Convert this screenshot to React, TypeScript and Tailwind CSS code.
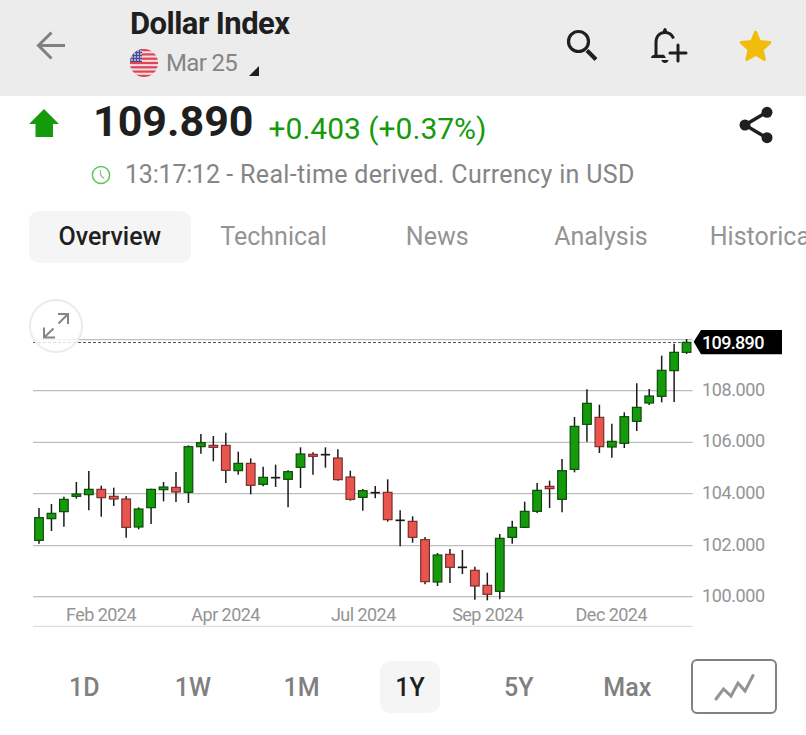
import { useState } from "react";
import clsx from "clsx";

// [high, body top, body bottom, low], in chart units (3 per pixel)
type Candle = [number, number, number, number, "up" | "down" | "flat"];

const CANDLES: Candle[] = [
  [654, 683, 751, 761, "up"],
  [642, 670, 686, 723, "up"],
  [620, 628, 665, 710, "up"],
  [576, 612, 619, 626, "up"],
  [543, 598, 614, 661, "up"],
  [587, 598, 623, 680, "down"],
  [593, 619, 627, 648, "down"],
  [618, 627, 712, 743, "down"],
  [652, 657, 711, 718, "up"],
  [596, 598, 653, 702, "up"],
  [576, 591, 599, 634, "up"],
  [546, 592, 606, 636, "down"],
  [466, 470, 607, 639, "up"],
  [432, 458, 470, 491, "up"],
  [438, 466, 472, 514, "down"],
  [428, 466, 541, 579, "down"],
  [485, 520, 542, 554, "up"],
  [505, 520, 586, 613, "down"],
  [530, 562, 583, 589, "up"],
  [524, 563, 563, 591, "flat"],
  [541, 545, 568, 652, "up"],
  [472, 492, 532, 594, "up"],
  [487, 493, 499, 554, "down"],
  [472, 494, 494, 533, "flat"],
  [478, 504, 569, 572, "down"],
  [542, 561, 628, 632, "down"],
  [597, 602, 622, 662, "up"],
  [588, 608, 608, 625, "flat"],
  [568, 607, 689, 695, "down"],
  [661, 691, 691, 769, "flat"],
  [679, 694, 742, 758, "down"],
  [741, 749, 875, 883, "down"],
  [789, 795, 876, 888, "up"],
  [777, 793, 832, 879, "down"],
  [780, 832, 832, 852, "flat"],
  [830, 841, 888, 929, "down"],
  [848, 886, 913, 931, "down"],
  [732, 745, 904, 928, "up"],
  [692, 712, 742, 761, "up"],
  [635, 664, 712, 714, "up"],
  [579, 601, 664, 669, "up"],
  [572, 589, 596, 654, "down"],
  [507, 542, 628, 667, "up"],
  [381, 409, 538, 547, "up"],
  [298, 340, 403, 455, "up"],
  [344, 382, 470, 489, "down"],
  [401, 454, 471, 503, "up"],
  [367, 380, 460, 474, "up"],
  [280, 352, 394, 423, "up"],
  [297, 318, 339, 345, "up"],
  [197, 241, 319, 337, "up"],
  [161, 187, 242, 336, "up"],
  [147, 157, 187, 192, "up"],
];

const GRID = [
  { y: 149, label: "" },
  { y: 302, label: "108.000" },
  { y: 457, label: "106.000" },
  { y: 611, label: "104.000" },
  { y: 767, label: "102.000" },
  { y: 920, label: "100.000" },
];

const MONTHS = [
  { x: 303, label: "Feb 2024" },
  { x: 677, label: "Apr 2024" },
  { x: 1090, label: "Jul 2024" },
  { x: 1463, label: "Sep 2024" },
  { x: 1834, label: "Dec 2024" },
];

const TABS = ["Overview", "Technical", "News", "Analysis", "Historical Data"];
const RANGES = ["1D", "1W", "1M", "1Y", "5Y", "Max"];

export default function App() {
  const [tab, setTab] = useState("Overview");
  const [range, setRange] = useState("1Y");

  return (
    <div className="h-[735px] w-[806px] overflow-hidden bg-white font-['Roboto',sans-serif] text-[#1f1f1f]">
      <Header />
      <Quote />

      <nav className="mt-[14px] flex overflow-hidden pl-7">
        {TABS.map((name) => (
          <button
            key={name}
            onClick={() => setTab(name)}
            className={clsx(
              "mx-px h-[52px] w-[161.7px] flex-none rounded-[10px] text-[25px] whitespace-nowrap",
              tab === name ? "bg-[#f5f5f5] font-medium text-[#1f1f1f]" : "text-[#949494]",
              name === "Historical Data" ? "pl-[26px] text-left" : "text-center",
            )}
          >
            {name}
          </button>
        ))}
      </nav>

      <section className="relative mt-[27px] h-[345px]">
        <Chart />
        <button
          aria-label="Expand chart"
          className="absolute top-[9px] left-[29px] flex size-[54px] items-center justify-center rounded-full border-2 border-[#ebebeb] bg-white/80"
        >
          <svg viewBox="0 0 28 28" className="size-7" fill="none" stroke="#858585" strokeWidth="2">
            <path d="M16 2h10v10M26 2 16.500 11.500M2 15.500v10h11M2 25.500l9.500-9" />
          </svg>
        </button>
      </section>

      <div className="flex pt-6 pl-[30px]">
        {RANGES.map((name) => (
          <button
            key={name}
            onClick={() => setRange(name)}
            className="mt-[2px] flex h-[52px] w-[108.6px] justify-center text-[25px] font-medium"
          >
            <span
              className={clsx(
                "flex h-full min-w-[60px] items-center justify-center rounded-[10px] pt-px",
                range === name ? "bg-[#f5f5f5] text-[#1f1f1f]" : "text-[#808080]",
              )}
            >
              {name}
            </span>
          </button>
        ))}
        <button
          aria-label="Chart type"
          className="ml-[9px] flex h-[55px] w-[86px] items-center justify-center rounded-[6px] border-2 border-[#808080]"
        >
          <svg viewBox="0 0 42 28" className="h-7 w-[42px]" fill="none" stroke="#949494" strokeWidth="3" strokeLinecap="round">
            <path d="m3 26 7.500-10 7.500 7 7-13 7 8 8-15.500" />
          </svg>
        </button>
      </div>
    </div>
  );
}

function Header() {
  return (
    <header className="flex h-24 bg-[#ececec]">
      <svg viewBox="0 0 30 30" className="mt-[31px] ml-9 size-[30px]" fill="none" stroke="#808080" strokeWidth="3">
        <path d="M29 14.500H3M15.500 1.500 2.500 14.500l13 13" />
      </svg>
      <div className="ml-16 w-[436px]">
        <h1 className="pt-[7px] text-[31px] leading-[34px] font-bold tracking-[-0.55px]">Dollar Index</h1>
        <div className="mt-[6px] flex items-center">
          <UsFlag />
          <span className="ml-2 text-[24px] leading-[32px] tracking-[-0.65px] text-[#858585]">Mar 25</span>
          <svg viewBox="0 0 10 10" className="mt-[15px] ml-3 size-[10px]">
            <path d="M10 0v10H0z" fill="#1f1f1f" />
          </svg>
        </div>
      </div>
      <svg viewBox="0 0 32 32" className="mt-[29px] size-8" fill="none" stroke="#1f1f1f">
        <circle cx="12.500" cy="12.500" r="10" strokeWidth="3.200" />
        <path d="m21 21.500 9 9" strokeWidth="4" />
      </svg>
      <svg viewBox="0 0 38 38" className="mt-[27px] ml-[52px] size-[38px]" fill="none" stroke="#1f1f1f" strokeWidth="3">
        <path d="M6 29V15.500C6 9 10 5.500 15 5.500c4 0 7 2 8.500 6" />
        <path d="M1 31c0-2.500 2-3.300 4.500-3.300H14l2 3.300z" fill="#1f1f1f" stroke="none" />
        <path d="M11.500 6.500c1.500 0 1.200-5.500 3.500-5.500s2 5.500 3.500 5.500zM11.500 33h7c-.3 4-6.700 4-7 0z" fill="#1f1f1f" stroke="none" />
        <path d="M28 18v16M20 26h16" strokeLinecap="round" />
      </svg>
      <svg viewBox="0 0 34 34" className="mt-[29px] ml-[50px] size-[34px]">
        <path
          d="m17.600 3.200 3.900 9.300 10.300 1.100-7.700 7 2.300 9.900-8.800-5.300-8.800 5.300 2.300-9.900-7.700-7 10.300-1.100z"
          fill="#f2bc0c"
          stroke="#f2bc0c"
          strokeWidth="3"
          strokeLinejoin="round"
        />
      </svg>
    </header>
  );
}

function UsFlag() {
  return (
    <svg viewBox="0 0 28 28" className="size-7">
      <clipPath id="flag-disc">
        <circle cx="14" cy="14" r="14" />
      </clipPath>
      <g clipPath="url(#flag-disc)">
        <rect width="28" height="28" fill="#f3dfe2" />
        {[0, 4.3, 8.6, 12.9, 17.2, 21.5, 25.8].map((y) => (
          <rect key={y} y={y} width="28" height="2.200" fill="#df4355" />
        ))}
        <rect width="12" height="13" fill="#494b91" />
        {[3, 6, 9, 12].map((y) =>
          [2, 5, 8, 11].map((x) => <circle key={`${x}-${y}`} cx={x} cy={y - 1} r=".9" fill="#d5d5e8" />),
        )}
      </g>
    </svg>
  );
}

function Quote() {
  return (
    <section className="flex h-[101px]">
      <svg viewBox="0 0 30 30" className="mt-3 ml-[29px] size-[30px]">
        <path d="M15 1 30 16h-6v13H6.500V16H0z" fill="#149a0b" />
      </svg>
      <div className="ml-8 w-[640px]">
        <div className="flex pl-[2px] whitespace-nowrap">
          <span className="-mt-px text-[43px] leading-[52px] font-bold">109.890</span>
          <span className="mt-[13px] ml-[15px] text-[30px] leading-[40px] text-[#149a0b]">+0.403 (+0.37%)</span>
        </div>
        <div className="mt-[9px] flex items-center whitespace-nowrap">
          <svg viewBox="0 0 20 20" className="size-5" fill="none">
            <circle cx="10" cy="10" r="8.600" stroke="#58c958" strokeWidth="1.500" />
            <path d="M9.500 5v5l3.500 3.500" stroke="#a5b5a5" strokeWidth="1.300" />
          </svg>
          <span className="ml-[14px] pt-px text-[25px] leading-[32px] text-[#858585]">
            <span className="tracking-[-0.2px]">13:17:12</span>
            <span className="tracking-[0.330px]"> - Real-time derived. Currency in USD</span>
          </span>
        </div>
      </div>
      <svg viewBox="0 0 34 38" className="mt-[10px] ml-2 h-[38px] w-[34px]" fill="#1f1f1f" stroke="#1f1f1f">
        <path d="M28 6 6 19l22 13" fill="none" strokeWidth="3.500" />
        <circle cx="28" cy="6.300" r="5.500" stroke="none" />
        <circle cx="6" cy="19" r="5.500" stroke="none" />
        <circle cx="28" cy="31.700" r="5.500" stroke="none" />
      </svg>
    </section>
  );
}

function Chart() {
  return (
    <svg viewBox="0 0 2418 1035" className="block h-[345px] w-[806px]">
      {GRID.map(({ y, label }) => (
        <g key={y}>
          <path d={`M99 ${y}H2078`} stroke="#bdbdbd" strokeWidth="4" />
          <text x="2106" y={y + 15} fontSize="54" letterSpacing="-1.2" fill="#949494">
            {label}
          </text>
        </g>
      ))}
      <path d="M99 1009H2078" stroke="#dedede" strokeWidth="4" />
      {MONTHS.map(({ x, label }) => (
        <text key={label} x={x} y="993" fontSize="54" letterSpacing="-1.600" fill="#949494" textAnchor="middle">
          {label}
        </text>
      ))}
      <path d="M99 157.500H2078" stroke="#555" strokeWidth="3" strokeDasharray="9 6" />

      {CANDLES.map(([high, top, bottom, low, dir], i) => {
        const x = 117 + i * 37.36;
        return (
          <g key={i} stroke="#1a1a1a">
            <path d={`M${x} ${high}V${low}`} strokeWidth="4.500" />
            {dir === "flat" ? (
              <path d={`M${x - 14} ${top}h28`} strokeWidth="5" />
            ) : (
              <rect
                x={x - 13}
                y={top}
                width="26"
                height={bottom - top}
                fill={dir === "up" ? "#149a0b" : "#e8554f"}
                stroke={dir === "up" ? "#0a4a08" : "#782c29"}
                strokeWidth="3.500"
              />
            )}
          </g>
        );
      })}

      <path d="M2081 155l22-35h243v73h-243z" fill="#000" />
      <text x="2106" y="176" fontSize="54" letterSpacing="-2" fontWeight="500" fill="#fff">
        109.890
      </text>
    </svg>
  );
}
